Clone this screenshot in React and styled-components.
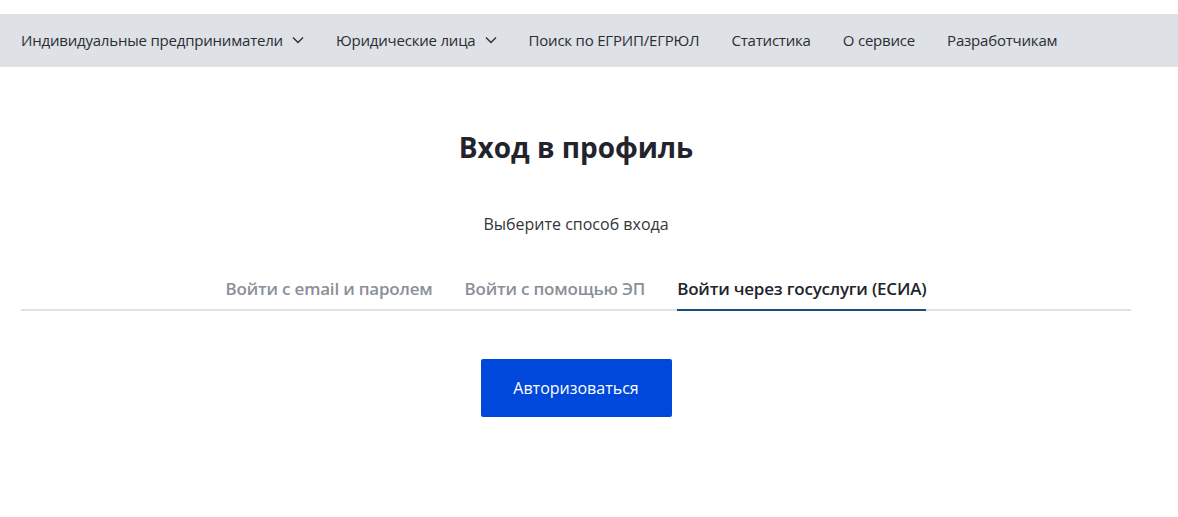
import React, { useState } from "react";
import styled, { createGlobalStyle } from "styled-components";

const GlobalStyle = createGlobalStyle`
  html, body {
    margin: 0;
    padding: 0;
    background: #ffffff;
    font-family: "Open Sans", "Noto Sans", sans-serif;
    color: #22242b;
  }
`;

const Page = styled.div`
  padding-top: 14px;
`;

const TopBar = styled.nav`
  height: 53px;
  background: #dee1e5;
`;

const TopInner = styled.ul`
  width: 1110px;
  margin: 0 0 0 21px;
  padding: 0 0 2px;
  box-sizing: border-box;
  list-style: none;
  display: flex;
  align-items: center;
  height: 100%;
  gap: 32px;
`;

const NavItem = styled.li`
  display: flex;
  align-items: center;
  gap: 9px;
  font-size: 15px;
  letter-spacing: -0.2px;
  color: #2a2d34;
  white-space: nowrap;
  cursor: pointer;
`;

const Chevron = () => (
  <svg width="12" height="8" viewBox="0 0 12 8" fill="none">
    <path d="M1 1.5l5 5 5-5" stroke="#2a2d34" strokeWidth="1.4" />
  </svg>
);

const Main = styled.main`
  width: 1110px;
  margin: 0 0 0 21px;
  display: flex;
  flex-direction: column;
  align-items: center;
`;

const Title = styled.h1`
  margin: 61px 0 0;
  font-size: 28px;
  line-height: 38px;
  font-weight: 700;
  color: #22232c;
`;

const Subtitle = styled.p`
  margin: 47px 0 0;
  font-size: 16px;
  line-height: 22px;
  color: #33363d;
`;

const Tabs = styled.div`
  align-self: stretch;
  display: flex;
  justify-content: center;
  gap: 32px;
  margin-top: 43px;
  border-bottom: 2px solid #e1e3e6;
`;

const Tab = styled.button`
  border: none;
  background: none;
  padding: 0 0 9px;
  margin-bottom: -2px;
  font-family: "Open Sans", sans-serif;
  font-size: 17px;
  font-weight: 600;
  line-height: 22px;
  letter-spacing: -0.2px;
  color: ${(p) => (p.$active ? "#22232c" : "#8a9098")};
  border-bottom: 2px solid ${(p) => (p.$active ? "#1d4f7c" : "transparent")};
  cursor: pointer;
`;

const Button = styled.button`
  margin-top: 48px;
  width: 191px;
  height: 58px;
  border: none;
  border-radius: 2px;
  background: #0047dc;
  color: #ffffff;
  font-family: "Open Sans", sans-serif;
  font-size: 16px;
  cursor: pointer;
`;

const navItems = [
  { label: "Индивидуальные предприниматели", menu: true },
  { label: "Юридические лица", menu: true },
  { label: "Поиск по ЕГРИП/ЕГРЮЛ" },
  { label: "Статистика" },
  { label: "О сервисе" },
  { label: "Разработчикам" },
];

const tabs = [
  "Войти с email и паролем",
  "Войти с помощью ЭП",
  "Войти через госуслуги (ЕСИА)",
];

export default function App() {
  const [active, setActive] = useState(2);
  return (
    <Page>
      <GlobalStyle />
      <TopBar>
        <TopInner>
          {navItems.map((n) => (
            <NavItem key={n.label}>
              {n.label}
              {n.menu && <Chevron />}
            </NavItem>
          ))}
        </TopInner>
      </TopBar>
      <Main>
        <Title>Вход в профиль</Title>
        <Subtitle>Выберите способ входа</Subtitle>
        <Tabs>
          {tabs.map((t, i) => (
            <Tab key={t} $active={i === active} onClick={() => setActive(i)}>
              {t}
            </Tab>
          ))}
        </Tabs>
        <Button>Авторизоваться</Button>
      </Main>
    </Page>
  );
}
